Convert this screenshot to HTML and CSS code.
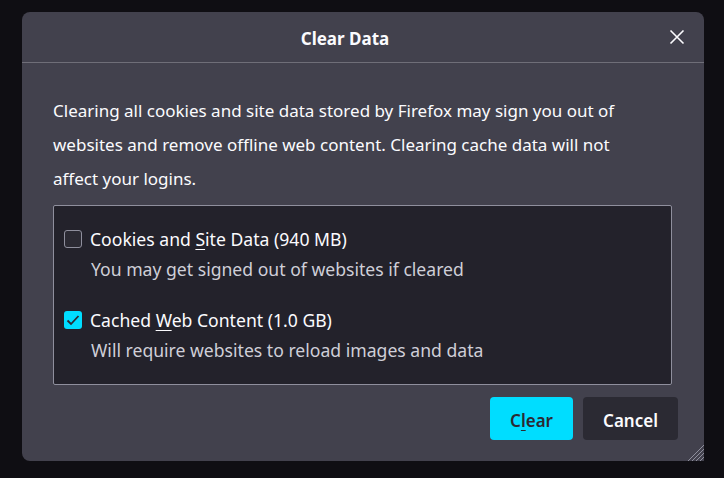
FILE: index.html
```html
<!DOCTYPE html>
<html>
<head>
<meta charset="utf-8">
<link rel="stylesheet" href="styles.css">
</head>
<body>
<div class="dialog">
  <div class="header">
    <div class="title">Clear Data</div>
    <button class="close" aria-label="Close">
      <svg width="16" height="16" viewBox="0 0 16 16"><path d="M1.5 1.5 L14.5 14.5 M14.5 1.5 L1.5 14.5" stroke="#fbfbfe" stroke-width="1.6" fill="none"/></svg>
    </button>
  </div>
  <div class="body">
    <p class="desc">Clearing all cookies and site data stored by Firefox may sign you out of websites and remove offline web content. Clearing cache data will not affect your logins.</p>
    <div class="options">
      <div class="option">
        <div class="row"><span class="check"></span><span class="label">Cookies and <u>S</u>ite Data (940 MB)</span></div>
        <div class="sub">You may get signed out of websites if cleared</div>
      </div>
      <div class="option">
        <div class="row"><span class="check checked"><svg width="18" height="18" viewBox="0 0 18 18"><path d="M3.5 9.5 L7 13 L14.5 5" stroke="#2b2a33" stroke-width="1.8" fill="none"/></svg></span><span class="label">Cached <u>W</u>eb Content (1.0 GB)</span></div>
        <div class="sub">Will require websites to reload images and data</div>
      </div>
    </div>
    <div class="buttons">
      <button class="btn primary">C<u>l</u>ear</button>
      <button class="btn secondary">Cancel</button>
    </div>
  </div>
  <div class="grip">
    <svg width="18" height="18" viewBox="0 0 18 18"><path d="M18 2 L2 18 M18 6 L6 18 M18 10 L10 18 M18 14 L14 18" stroke="#8f8f9d" stroke-width="1" fill="none"/></svg>
  </div>
</div>
</body>
</html>
```
FILE: styles.css
```css
html, body {
  margin: 0;
  padding: 0;
  background: #0f0e13;
  font-family: "Noto Sans", "Open Sans", sans-serif;
  color: #fbfbfe;
}
body {
  padding: 12px 0 0 22px;
  width: 724px;
  height: 478px;
  box-sizing: border-box;
  overflow: hidden;
}
.dialog {
  position: relative;
  width: 682px;
  height: 449px;
  background: #42414d;
  border-radius: 8px 8px 0 8px;
  box-sizing: border-box;
}
.header {
  height: 50px;
  border-bottom: 1px solid #6f6e78;
  display: flex;
  align-items: center;
  justify-content: center;
  position: relative;
  padding-right: 36px;
}
.title {
  font-size: 17px;
  font-weight: 700;
  margin-top: 3px;
}
.close {
  position: absolute;
  right: 19px;
  top: 17px;
  background: none;
  border: none;
  padding: 0;
  width: 16px;
  height: 16px;
  display: flex;
}
.body {
  padding: 31px 26px 0 31px;
}
.desc {
  margin: 0 0 9px 0;
  width: 580px;
  font-size: 17px;
  line-height: 34px;
}
.options {
  margin-right: 6px;
  height: 180px;
  box-sizing: border-box;
  background: #23222b;
  border: 1px solid #8f8f9d;
  border-radius: 2px;
  padding: 21px 10px 0 10px;
  display: flex;
  flex-direction: column;
  gap: 28px;
}
.row {
  display: flex;
  align-items: center;
  gap: 8px;
  height: 24px;
  font-size: 17.6px;
}
.check {
  width: 18px;
  height: 18px;
  box-sizing: border-box;
  border: 1px solid #8f8f9d;
  border-radius: 3px;
  background: #2b2a33;
  display: flex;
}
.check.checked {
  border: none;
  background: #00ddff;
}
.label u { text-decoration-thickness: 1px; text-underline-offset: 3px; }
.sub {
  margin-left: 27px;
  margin-top: 7px;
  font-size: 17.6px;
  color: #cfcfd8;
  line-height: 22px;
}
.buttons {
  display: flex;
  justify-content: flex-end;
  gap: 10px;
  margin-top: 12px;
}
.btn {
  height: 43px;
  border: none;
  border-radius: 4px;
  font-family: "Noto Sans", "Open Sans", sans-serif;
  font-size: 17px;
  font-weight: 600;
  padding: 3px 10px 0;
}
.btn.primary {
  background: #00ddff;
  color: #2b2a33;
  width: 83px;
}
.btn.secondary {
  background: #2b2a33;
  color: #fbfbfe;
  width: 95px;
}
.btn u { text-decoration-thickness: 1px; text-underline-offset: 3px; }
.grip {
  position: absolute;
  right: 0;
  bottom: 0;
  width: 18px;
  height: 18px;
  display: flex;
}
```
